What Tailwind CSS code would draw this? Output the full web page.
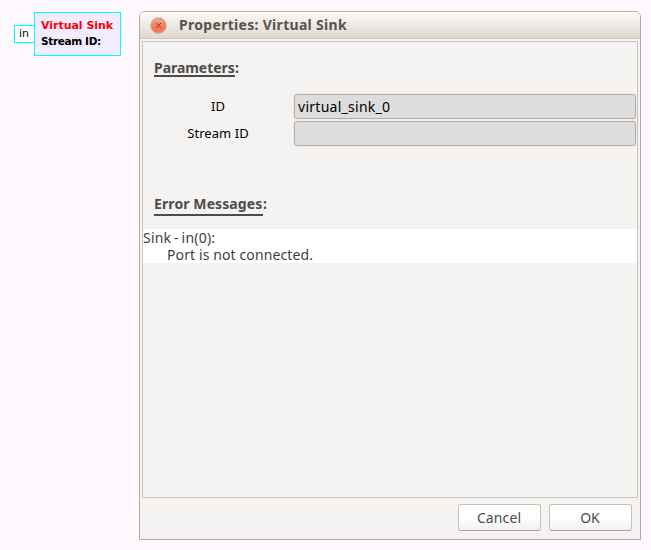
<!DOCTYPE html>
<html lang="en">
<head>
<meta charset="utf-8">
<title>Properties: Virtual Sink</title>
<script src="https://cdn.jsdelivr.net/npm/@tailwindcss/browser@4"></script>
</head>
<body class="w-[651px] h-[550px] overflow-hidden bg-[#fef8ff] flex items-start font-['Noto_Sans',sans-serif] text-[#4c4c4c] whitespace-nowrap">
  <div class="w-[139px] shrink-0 pl-[14px] pt-[12px] flex items-start font-['DejaVu_Sans',sans-serif] text-[11px] text-black">
    <div class="mt-[13px] w-[21px] h-[18px] -mr-px border border-[#00ffff] bg-white pl-[4px] leading-[16px]">in</div>
    <div class="w-[87px] h-[44px] border border-[#00ffff] bg-[#f1ecff] pl-[6px] pt-[5px] font-bold leading-[16px]">
      <div class="text-[#ff0000] text-[11px] tracking-[-0.03px]">Virtual Sink</div>
      <div class="text-[10.5px] tracking-[-0.35px] leading-[15px]">Stream ID:</div>
    </div>
  </div>
  <main class="mt-[11px] w-[502px] h-[529px] shrink-0 border border-[#b5aba1] rounded-t-[6px] bg-[#f4f3f1] flex flex-col">
    <header class="h-[27px] shrink-0 rounded-t-[5px] border-t border-t-white border-b border-b-[#d2c6bc] bg-linear-to-b from-[#faf9f7] to-[#dfd8d0] flex items-center pl-[10px]">
      <svg class="size-[18px] shrink-0" viewBox="0 0 18 18">
        <defs><linearGradient id="g" x2="0" y2="1"><stop stop-color="#f8ab90"/><stop offset=".5" stop-color="#f28059"/><stop offset="1" stop-color="#f0763d"/></linearGradient></defs>
        <circle cx="8.5" cy="8.6" r="8.4" fill="#d3c3b9"/>
        <circle cx="8.5" cy="8.6" r="7.3" fill="url(#g)" stroke="#dc8b70" stroke-width=".8"/>
        <path d="M6 6l5 5M11 6l-5 5" stroke="#75402d" stroke-width="1"/>
      </svg>
      <h1 class="ml-[11px] -mt-[2px] text-[14px] leading-[20px] font-bold text-[#5c524b] tracking-[0.3px]">Properties: Virtual Sink</h1>
    </header>
    <section class="mx-[2px] mt-[2px] h-[457px] shrink-0 border border-[#cdc3b9]">
      <h2 class="ml-[11px] mt-[16px] h-[19px] flex text-[14px] leading-[20px] font-bold"><span class="w-[81px] border-b-2 border-[#4c4c4c] tracking-[-0.05px]">Parameters</span>:</h2>
      <div class="mt-[17px] flex flex-col gap-[2px] text-black">
        <div class="flex"><div class="w-[151px] text-center text-[13px] leading-[25px] pr-px">ID</div><div class="w-[342px] h-[25px] border border-[#b5ada4] rounded-[3px] bg-[#dddddd] shadow-[0_0_0_1px_#efe9e3] pl-[3px] text-[14px] leading-[24px] tracking-[0.27px]">virtual_sink_0</div></div>
        <div class="flex"><div class="w-[151px] text-center text-[13px] leading-[25px] pr-px tracking-[0.06px]">Stream ID</div><div class="w-[342px] h-[25px] border border-[#b5ada4] rounded-[3px] bg-[#dddddd] shadow-[0_0_0_1px_#efe9e3]"></div></div>
      </div>
      <h2 class="ml-[11px] mt-[48px] h-[22px] flex text-[14px] leading-[20px] font-bold"><span class="w-[109px] border-b-2 border-[#4c4c4c] tracking-[0.1px]">Error Messages</span>:</h2>
      <div class="mt-[13px] h-[34px] bg-white text-[14px] leading-[17px] text-[#3f3f3f]"><div class="tracking-[0.2px] [word-spacing:-1px]">Sink - in(0):</div><div class="pl-[24px] tracking-[0.11px]">Port is not connected.</div></div>
    </section>
    <footer class="mt-[6px] pr-[8px] flex justify-end gap-[8px] text-[14px]">
      <button class="w-[83px] h-[27px] rounded-[3px] border border-[#c9c1b9] border-b-[#aaa198] bg-linear-to-b from-white from-50% to-[#f1f0ee] leading-[25px] pr-px tracking-[0.1px]">Cancel</button>
      <button class="w-[83px] h-[27px] rounded-[3px] border border-[#c9c1b9] border-b-[#aaa198] bg-linear-to-b from-white from-50% to-[#f1f0ee] leading-[25px] pr-px">OK</button>
    </footer>
  </main>
</body>
</html>
